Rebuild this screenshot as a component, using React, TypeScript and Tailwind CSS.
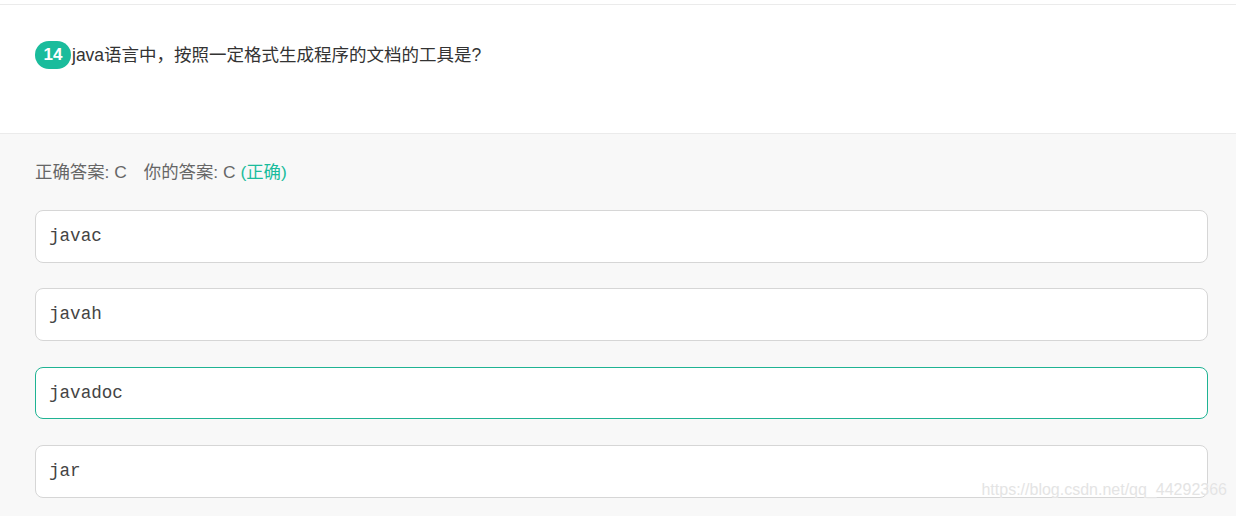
import React from 'react';

const options = [
  { key: 'A', text: 'javac' },
  { key: 'B', text: 'javah' },
  { key: 'C', text: 'javadoc' },
  { key: 'D', text: 'jar' },
];

const selected = 'C';

export default function App() {
  return (
    <div
      className="relative min-h-screen bg-[#f8f8f8]"
      style={{ fontFamily: '"Liberation Sans", "Noto Sans CJK SC", sans-serif' }}
    >
      <div className="h-1 bg-white" />
      <div className="h-[130px] border-y border-[#ebebeb] bg-white pl-[35px] pr-[28px] pt-[36px]">
        <div className="flex items-center">
          <span className="flex h-[28px] w-[36px] items-center justify-center rounded-full bg-[#1abc9c] text-[17px] font-bold text-white">
            14
          </span>
          <span className="ml-px text-[17.5px] text-[#333]">java语言中，按照一定格式生成程序的文档的工具是?</span>
        </div>
      </div>

      <div className="pl-[35px] pr-[28px] pt-[26px]">
        <div className="h-[24px] text-[17.4px] leading-[24px] text-[#666]">
          正确答案: C<span className="ml-[17px]">你的答案: C</span>{' '}
          <span className="text-[#1abc9c]">(正确)</span>
        </div>

        <div className="mt-[26px] flex flex-col gap-[25.8px]">
          {options.map((option) => (
            <div
              key={option.key}
              className={`flex h-[52.6px] items-center rounded-lg border bg-white px-[13px] text-[17.6px] text-[#444] ${
                option.key === selected ? 'border-[#1fb393]' : 'border-[#d6d6d6]'
              }`}
              style={{ fontFamily: '"Liberation Mono", monospace' }}
            >
              {option.text}
            </div>
          ))}
        </div>
      </div>

      <span
        className="absolute bottom-[14px] right-[9px] text-[16px] text-[#e4e4e4]"
        style={{ textShadow: '0 0 1px #fff' }}
      >
        https://blog.csdn.net/qq_44292366
      </span>
    </div>
  );
}
